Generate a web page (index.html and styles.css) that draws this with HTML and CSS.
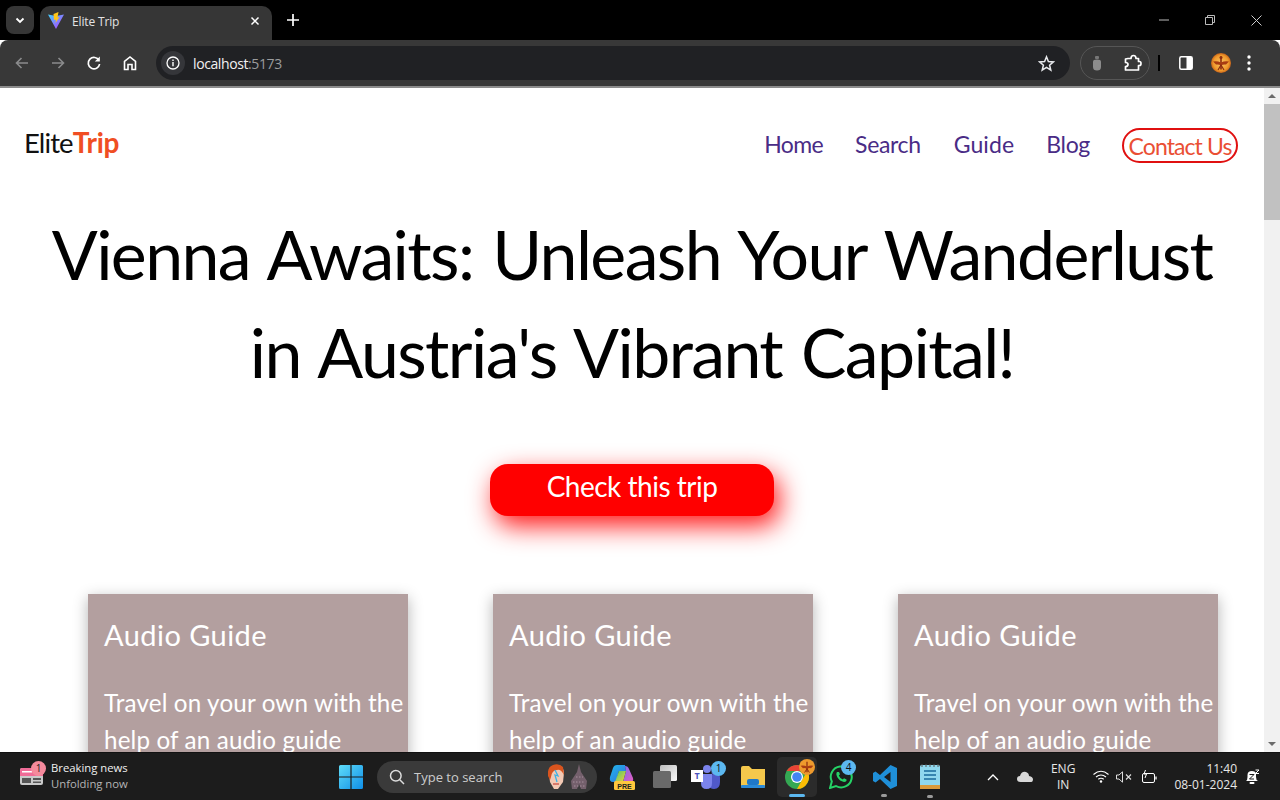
FILE: index.html
```html
<!DOCTYPE html>
<html lang="en">
<head>
<meta charset="utf-8">
<title>Elite Trip</title>
<link rel="stylesheet" href="styles.css">
</head>
<body>
<div class="window">
  <div class="tabstrip">
    <div class="tabsearch"><svg width="12" height="12" viewBox="0 0 12 12"><path d="M2.500 4.500 6 8l3.500-3.500" fill="none" stroke="#fff" stroke-width="1.800"/></svg></div>
    <div class="tab">
      <svg class="favicon" width="18" height="18" viewBox="0 0 18 18"><defs><linearGradient id="v" x1="0" y1="0" x2="1" y2="1"><stop offset="0" stop-color="#41d1ff"/><stop offset="1" stop-color="#bd34fe"/></linearGradient></defs><path d="M1 2.500 9 4l8-1.500L9 17z" fill="url(#v)"/><path d="M11.500 0 6.500 2l.5 6 2-.5-.5 3.500 4-6-2 .5z" fill="#ffc517"/></svg>
      <span class="tabtitle">Elite Trip</span>
      <svg class="tabclose" width="10" height="10" viewBox="0 0 10 10"><path d="M1.500 1.500l7 7M8.500 1.500l-7 7" stroke="#fff" stroke-width="1.500"/></svg>
    </div>
    <svg class="newtab" width="12" height="12" viewBox="0 0 12 12"><path d="M6 0v12M0 6h12" stroke="#fff" stroke-width="1.700"/></svg>
    <div class="wincontrols">
      <svg width="10" height="10" viewBox="0 0 10 10"><path d="M0 5h10" stroke="#bbb"/></svg>
      <svg width="10" height="10" viewBox="0 0 10 10"><path d="M.5 2.500h7v7h-7zM2.500 2.500V.5h7v7h-2" fill="none" stroke="#bbb"/></svg>
      <svg width="11" height="11" viewBox="0 0 11 11"><path d="M.5.5l10 10M10.500.5l-10 10" stroke="#ccc"/></svg>
    </div>
  </div>
  <div class="toolbar">
    <div class="navbtns">
      <svg width="16" height="16" viewBox="0 0 16 16"><path d="M14 8H2.500M7.500 3 2.500 8l5 5" fill="none" stroke="#8a8b8c" stroke-width="1.600"/></svg>
      <svg width="16" height="16" viewBox="0 0 16 16"><path d="M2 8h11.500M8.500 3l5 5-5 5" fill="none" stroke="#8a8b8c" stroke-width="1.600"/></svg>
      <svg width="16" height="16" viewBox="0 0 16 16"><path d="M13 5.500A5.700 5.700 0 1 0 13.600 9" fill="none" stroke="#fff" stroke-width="1.700"/><path d="M13.800 1.500v5h-5z" fill="#fff"/></svg>
      <svg width="16" height="16" viewBox="0 0 16 16"><path d="M2.500 14.500V6.500L8 2l5.500 4.500v8H10V9.500H6v5z" fill="none" stroke="#fff" stroke-width="1.600"/></svg>
    </div>
    <div class="omnibox">
      <div class="siteinfo"><svg width="14" height="14" viewBox="0 0 14 14"><circle cx="7" cy="7" r="6" fill="none" stroke="#fff" stroke-width="1.300"/><path d="M7 6v4.200M7 3.600v1.300" stroke="#fff" stroke-width="1.400"/></svg></div>
      <span class="url">localhost<span class="port">:5173</span></span>
      <svg class="star" width="17" height="17" viewBox="0 0 17 17"><path d="M8.500 1.800 10.400 6.500l5 .4-3.800 3.300 1.200 4.900-4.300-2.700-4.300 2.700 1.200-4.900L1.600 6.900l5-.4z" fill="none" stroke="#e8eaed" stroke-width="1.500"/></svg>
    </div>
    <div class="extpill">
      <svg width="10" height="15" viewBox="0 0 10 15"><rect x="3" y="0" width="4" height="3" rx="1" fill="#777"/><path d="M1 5.500Q1 3.500 5 3.500T9 5.500V11Q9 14.500 5 14.500T1 11z" fill="#8c8c8c"/></svg>
      <svg width="18" height="18" viewBox="0 0 18 18"><path d="M4 4.500 H7 Q7 1.500 9.500 1.500T12 4.500H14.500V7.500H15.500Q17 7.500 17 9.500T15.500 11.500H14.500V16H1.500V12.500Q4 12.500 4 10.500T1.500 8.500V5z" fill="none" stroke="#fff" stroke-width="1.700" stroke-linejoin="round"/></svg>
    </div>
    <div class="divider"></div>
    <div class="sidepanel"><svg width="14" height="14" viewBox="0 0 14 14"><rect x=".8" y=".8" width="12.400" height="12.400" rx="1.500" fill="none" stroke="#fff" stroke-width="1.500"/><rect x="7.500" y="1" width="5.500" height="12" fill="#fff"/></svg></div>
    <div class="avatar"><svg width="20" height="20" viewBox="0 0 20 20"><defs><radialGradient id="av"><stop offset="0" stop-color="#fbc565"/><stop offset=".75" stop-color="#f09a2c"/><stop offset="1" stop-color="#c9641a"/></radialGradient></defs><circle cx="10" cy="10" r="10" fill="url(#av)"/><path d="M10 3.500v13" stroke="#8e2f10" stroke-width="1.600"/><path d="M2 8.500Q6 7.500 10 9.500 14 7.500 18 8.500L15 11.500Q12 11 10 12.500 8 11 5 11.500z" fill="#a83c12"/><path d="M7 17l3-5 3 5" fill="none" stroke="#8e2f10" stroke-width="1.200"/><circle cx="10" cy="4.500" r="1.500" fill="#8e2f10"/></svg></div>
    <svg class="kebab" width="4" height="16" viewBox="0 0 4 16"><circle cx="2" cy="2" r="1.700" fill="#fff"/><circle cx="2" cy="8" r="1.700" fill="#fff"/><circle cx="2" cy="14" r="1.700" fill="#fff"/></svg>
  </div>
  <div class="viewport">
    <main class="page">
      <header class="sitehead">
        <a class="logo">Elite<b>Trip</b></a>
        <nav class="sitenav">
          <a class="home">Home</a>
          <a class="search">Search</a>
          <a class="guide">Guide</a>
          <a class="blog">Blog</a>
          <a class="contact">Contact Us</a>
        </nav>
      </header>
      <h1 class="headline">Vienna Awaits: Unleash Your Wanderlust<br>in Austria's Vibrant Capital!</h1>
      <div class="ctawrap"><button class="cta">Check this trip</button></div>
      <section class="cards">
        <article class="card"><h2>Audio Guide</h2><p>Travel on your own with the help of an audio guide</p></article>
        <article class="card"><h2>Audio Guide</h2><p>Travel on your own with the help of an audio guide</p></article>
        <article class="card"><h2>Audio Guide</h2><p>Travel on your own with the help of an audio guide</p></article>
      </section>
    </main>
    <div class="scrollbar">
      <svg width="16" height="16" viewBox="0 0 16 16"><path d="M8 6l4 4H4z" fill="#6b6b6b"/></svg>
      <div class="thumb"></div>
      <div class="track"></div>
      <svg width="16" height="16" viewBox="0 0 16 16"><path d="M8 10 4 6h8z" fill="#6b6b6b"/></svg>
    </div>
  </div>
  <footer class="taskbar">
    <div class="news">
      <div class="newsicon">
        <svg width="23" height="17" viewBox="0 0 23 17"><rect x="0" y="0" width="23" height="17" rx="2" fill="#c9c9c9"/><path d="M0 2q0-2 2-2h19q2 0 2 2v6H0z" fill="#f06b97"/><rect x="2" y="3" width="10" height="1.500" fill="#fff"/><rect x="2" y="10" width="9" height="5" fill="#555"/><rect x="13" y="10" width="8" height="2" fill="#555"/><rect x="13" y="13.500" width="8" height="1.500" fill="#555"/></svg>
        <span class="newsbadge">1</span>
      </div>
      <div class="newstext"><span class="n1">Breaking news</span><span class="n2">Unfolding now</span></div>
    </div>
    <div class="tasks">
      <svg class="winlogo" width="24" height="24" viewBox="0 0 24 24"><defs><linearGradient id="w" x1="0" y1="0" x2="1" y2="1"><stop offset="0" stop-color="#5fdcf8"/><stop offset="1" stop-color="#0f8fe8"/></linearGradient></defs><path d="M0 1.500Q0 0 1.500 0H11.400V11.400H0zM12.600 0H22.500Q24 0 24 1.500V11.400H12.600zM0 12.600H11.400V24H1.500Q0 24 0 22.500zM12.600 12.600H24V22.500Q24 24 22.500 24H12.600z" fill="url(#w)"/></svg>
      <div class="searchbox">
        <svg width="16" height="16" viewBox="0 0 16 16"><circle cx="6.800" cy="6.800" r="5.300" fill="none" stroke="#ddd" stroke-width="1.500"/><path d="M10.800 10.800 15 15" stroke="#ddd" stroke-width="1.500"/></svg>
        <span class="searchtext">Type to search</span>
        <svg class="doodle" width="40" height="26" viewBox="0 0 40 26"><path d="M1 9Q3 1 9 1t7 8l-1 9-5 7H6l-4-7z" fill="#f3c9b4"/><path d="M0 12Q-1 3 5 1T15 3L16 11Q13 5 9 6 4 6 3 13L2 16z" fill="#d9541e"/><path d="M7 6l3 6-3-1 2 7" fill="none" stroke="#3bb3e6" stroke-width="1.300"/><path d="M5 20h6" stroke="#c9463c" stroke-width="1.200"/><path d="M31 0 33 8 39 17 38 25 33 25 31 20 29 25 24 25 23 17 29 8z" fill="#74606c"/><path d="M25 18h12M26 22h11M28 13h7" stroke="#a58f9c" stroke-width="1" stroke-dasharray="1.500 1.500"/></svg>
      </div>
      <svg class="copilot" width="26" height="26" viewBox="0 0 26 26"><defs><linearGradient id="c1" x1="0" y1="0" x2="1" y2="1"><stop offset="0" stop-color="#22b8e8"/><stop offset="1" stop-color="#2f6fe0"/></linearGradient><linearGradient id="c2" x1="0" y1="0" x2="1" y2="1"><stop offset="0" stop-color="#7a6cf0"/><stop offset="1" stop-color="#e85cc0"/></linearGradient><linearGradient id="c3" x1="0" y1="0" x2="1" y2="1"><stop offset="0" stop-color="#4cc96c"/><stop offset="1" stop-color="#f6d13c"/></linearGradient></defs><path d="M8 1h8l1 6H10L7 18H4Q0 18 1 13L4 4Q5 1 8 1z" fill="url(#c1)"/><path d="M16 2Q19 2 20 5l4 9q1 4-3 4h-7l3-11z" fill="url(#c2)"/><path d="M10 7h7l-3 11H6z" fill="url(#c3)"/><rect x="5" y="17" width="21" height="9" rx="1.500" fill="#ffc83d"/><text x="15.500" y="24.500" class="pretext">PRE</text></svg>
      <svg class="taskview" width="24" height="23" viewBox="0 0 24 23"><defs><linearGradient id="tv" x1="0" y1="0" x2="1" y2="1"><stop offset="0" stop-color="#bdbdbd"/><stop offset="1" stop-color="#fafafa"/></linearGradient></defs><rect x="7" y="0" width="17" height="16" rx="1.500" fill="url(#tv)"/><rect x="0" y="6" width="18" height="17" rx="1.500" fill="#6a6a6a"/></svg>
      <div class="appicon teams">
        <svg width="24" height="24" viewBox="0 0 24 24"><circle cx="10" cy="4" r="4" fill="#7b83eb"/><circle cx="18" cy="7" r="3.500" fill="#5b62c4"/><path d="M13 10h8q2 0 2 2v5q0 7-6 7-4 0-5-3z" fill="#5059c9"/><path d="M4 9h11v9q0 6-5.500 6T4 18z" fill="#7b83eb"/></svg>
        <span class="teamst">T</span><span class="appbadge teamsb">1</span>
      </div>
      <svg class="folder" width="24" height="22" viewBox="0 0 24 22"><path d="M0 2Q0 0 2 0H8l3 3H24V20Q24 22 22 22H2Q0 22 0 20z" fill="#f5c84c"/><rect x="6" y="13" width="12" height="6" rx="2" fill="#1f78c8"/><rect x="0" y="19" width="24" height="3" rx="1" fill="#2a8ad8"/></svg>
      <div class="chromeslot">
        <svg width="26" height="26" viewBox="0 0 26 26"><circle cx="13" cy="13" r="12" fill="#34a853"/><path d="M2.600 7A12 12 0 0 1 23.400 7H13z" fill="#ea4335"/><path d="M23.400 7A12 12 0 0 1 13 25L18 16z" fill="#fbbc04"/><circle cx="13" cy="13" r="6" fill="#fff"/><circle cx="13" cy="13" r="4.800" fill="#4285f4"/></svg>
        <svg class="chromeavatar" width="16" height="16" viewBox="0 0 20 20"><circle cx="10" cy="10" r="10" fill="#ee9a2d"/><path d="M10 3.500v13" stroke="#8e2f10" stroke-width="1.600"/><path d="M2 8.500Q6 7.500 10 9.500 14 7.500 18 8.500L15 11.500Q12 11 10 12.500 8 11 5 11.500z" fill="#a83c12"/><path d="M7 17l3-5 3 5" fill="none" stroke="#8e2f10" stroke-width="1.200"/></svg>
        <span class="activebar"></span>
      </div>
      <div class="appicon wa">
        <svg width="24" height="24" viewBox="0 0 24 24"><path d="M1 23 2.800 16.500A10.500 10.500 0 1 1 7 21z" fill="none" stroke="#25d366" stroke-width="2"/><path d="M8 7Q6.500 9 8.500 12.500T15 17Q18 16.500 17.500 14.500L15 13.300 13.800 14.500Q11 13.500 9.800 10.500L11 9.200 10 7z" fill="#25d366"/></svg>
        <span class="appbadge wab">4</span>
      </div>
      <div class="appicon vs">
        <svg width="24" height="24" viewBox="0 0 24 24"><path d="M17.500 0 24 3v18l-6.500 3L7 14l-4.500 3.500L0 16v-8l2.500-1.500L7 10zM17.500 7 11 12l6.500 5z" fill="#1f8fd8"/></svg>
        <span class="dot"></span>
      </div>
      <div class="appicon np">
        <svg width="22" height="26" viewBox="0 0 22 26"><rect x="1" y="1" width="20" height="24" rx="1.500" fill="#8fd8ee"/><rect x="1" y="21" width="20" height="4" fill="#d99a3a"/><path d="M5 7h12M5 11h12M5 15h12" stroke="#1a6b9c" stroke-width="1.500"/><path d="M3 0v3M7 0v3M11 0v3M15 0v3M19 0v3" stroke="#555"/></svg>
        <span class="dot"></span>
      </div>
    </div>
    <div class="tray">
      <svg class="chev" width="12" height="8" viewBox="0 0 12 8"><path d="M1 7l5-5 5 5" fill="none" stroke="#fff" stroke-width="1.300"/></svg>
      <svg class="cloud" width="16" height="11" viewBox="0 0 16 11"><path d="M3.500 11Q0 11 0 8t3-3Q4.500 0 9 1q3 1 3 4 4 .5 4 3.500T13 11z" fill="#d8d8d8"/></svg>
      <div class="lang"><span>ENG</span><span>IN</span></div>
      <svg class="wifi" width="16" height="13" viewBox="0 0 16 13"><path d="M.5 4.500Q8-2 15.500 4.500M3 7q5-4 10 0M5.300 9.300q2.700-2 5.400 0" fill="none" stroke="#fff" stroke-width="1.100"/><circle cx="8" cy="11.500" r="1.200" fill="#fff"/></svg>
      <svg class="speaker" width="16" height="12" viewBox="0 0 16 12"><path d="M.5 4h2.500L6.500.8v10.400L3 8H.5z" fill="none" stroke="#ddd"/><path d="M10 3.500l5 5M15 3.500l-5 5" stroke="#ddd" stroke-width="1.100"/></svg>
      <svg class="battery" width="16" height="14" viewBox="0 0 16 14"><rect x="1.500" y="3.500" width="12" height="9" rx="1.500" fill="none" stroke="#fff"/><path d="M15 6.500v3" stroke="#fff" stroke-width="1.300"/><path d="M4.500 0 3 4h2.500L4 8" fill="none" stroke="#fff"/></svg>
      <div class="clock"><span>11:40</span><span>08-01-2024</span></div>
      <svg class="bell" width="15" height="16" viewBox="0 0 15 16"><path d="M1 12Q2.500 11 2.500 8V6Q2.500 2 7 2q3 0 4 2v4q0 3 2 4z" fill="#fff"/><rect x="4.500" y="13" width="5" height="2" rx="1" fill="#fff"/><path d="M4.500 5.500h4.500l-4.500 4.500h4.500" fill="none" stroke="#1c1c1c" stroke-width="1"/><path d="M10.500 1h3.500l-3.500 3.500h3.500" fill="none" stroke="#fff" stroke-width="1"/></svg>
    </div>
  </footer>
</div>
</body>
</html>
```

FILE: styles.css
```css
* { box-sizing: border-box; margin: 0; padding: 0; }
html, body { width: 1280px; height: 800px; overflow: hidden; background: #fff; }
body { font-family: "Liberation Sans", Arial, sans-serif; }
svg { display: block; flex: none; }

.window { width: 1280px; height: 800px; display: flex; flex-direction: column; overflow: hidden; }

/* tab strip */
.tabstrip { height: 40px; background: #000; display: flex; align-items: flex-end; padding-left: 6px; flex: none; }
.tabsearch { width: 28px; height: 28px; margin-bottom: 6px; border-radius: 8px; background: #363636; display: flex; align-items: center; justify-content: center; }
.tab { width: 232px; height: 34px; margin-left: 6px; background: #363636; border-radius: 10px 10px 0 0; display: flex; align-items: center; padding: 0 12px 4px 7px; }
.favicon { margin-right: 7px; }
.tabtitle { flex: 1; font-size: 12px; color: #e3e3e3; font-family: "Open Sans", sans-serif; letter-spacing: -.15px; }
.newtab { margin: 0 0 14px 15px; }
.wincontrols { margin-left: auto; display: flex; gap: 36px; align-items: center; height: 40px; padding-right: 18px; align-self: flex-start; }

/* toolbar */
.toolbar { height: 48px; flex: none; background: #383838; border-radius: 8px 8px 0 0; border-bottom: 2px solid #8c8c8c; display: flex; align-items: center; padding: 0 23px 0 14px; }
.navbtns { display: flex; gap: 20px; align-items: center; }
.omnibox { width: 914px; height: 34px; margin-left: 18px; border-radius: 17px; background: #202124; display: flex; align-items: center; padding: 0 15px 0 5px; }
.siteinfo { width: 24px; height: 24px; border-radius: 50%; background: #35363a; display: flex; align-items: center; justify-content: center; margin-right: 8px; }
.url { flex: 1; font-size: 14px; color: #f1f1f1; font-family: "Open Sans", sans-serif; letter-spacing: -.4px; }
.port { color: #9a9b9d; }
.extpill { width: 70px; height: 34px; margin-left: 10px; border: 1px solid #565656; border-radius: 17px; display: flex; align-items: center; justify-content: space-between; padding: 0 7px 0 11px; }
.divider { width: 2px; height: 16px; background: #000; margin-left: 8px; }
.sidepanel { margin-left: 19px; }
.avatar { margin-left: 18px; }
.kebab { margin-left: 16px; }

/* viewport */
.viewport { flex: 1; min-height: 0; display: flex; }
.page { flex: 1; min-width: 0; background: #fff; overflow: hidden; font-family: Lato, sans-serif; font-weight: 400; }
.scrollbar { width: 16px; background: #f1f1f1; display: flex; flex-direction: column; align-items: center; }
.thumb { width: 16px; height: 116px; background: #c1c1c1; flex: none; }
.track { flex: 1; }

.sitehead { display: flex; justify-content: space-between; align-items: center; padding: 38px 26px 0 24px; height: 76px; }
.logo { font-size: 27.500px; color: #111; font-weight: 400; letter-spacing: -.9px; margin-top: -6px; }
.logo b { color: #f04e23; font-weight: 700; font-size: 28px; letter-spacing: -.2px; }
.sitenav { display: flex; align-items: center; font-size: 23px; color: #4a2c86; font-weight: 400; }
.home { margin-right: 32px; letter-spacing: -.6px; margin-top: -3px; }
.search { margin-right: 33px; letter-spacing: -.35px; margin-top: -3px; }
.guide { margin-right: 32px; letter-spacing: .1px; margin-top: -3px; }
.blog { margin-right: 32px; letter-spacing: -.3px; margin-top: -3px; }
.contact { width: 116px; height: 35px; border: 2px solid #e01010; border-radius: 18px; color: #ea4f34; text-align: center; line-height: 33px; letter-spacing: -.9px; white-space: nowrap; }

.headline { margin-top: 41px; text-align: center; font-size: 68px; line-height: 98px; font-weight: 400; color: #000; letter-spacing: -1.600px; word-spacing: 3px; white-space: nowrap; }
.ctawrap { display: flex; justify-content: center; margin-top: 63px; }
.cta { width: 284px; height: 52px; background: #f00; border: 0; border-radius: 18px; color: #fff; font-family: Lato, sans-serif; font-weight: 400; font-size: 28px; letter-spacing: -.5px; box-shadow: 5px 10px 26px rgba(255,0,0,.9); padding-bottom: 8px; }

.cards { display: grid; grid-template-columns: repeat(3, 320px); gap: 85px; padding-left: 88px; margin-top: 78px; }
.card { background: #b39f9f; color: #fff; height: 240px; padding: 21px 0 0 16px; box-shadow: 0 4px 14px rgba(0,0,0,.3); }
.card h2 { font-size: 29px; font-weight: 400; line-height: 40px; letter-spacing: .45px; }
.card p { margin-top: 29px; font-size: 24.200px; font-weight: 400; line-height: 37px; letter-spacing: .15px; }

/* taskbar */
.taskbar { height: 48px; flex: none; background: #1c1c1c; display: flex; align-items: center; color: #fff; font-family: "Open Sans", sans-serif; border-top: 1px solid #111; }
.news { display: flex; align-items: center; margin-left: 20px; width: 319px; }
.newsicon { position: relative; width: 23px; height: 17px; margin-right: 8px; }
.newsbadge { position: absolute; left: 11px; top: -7px; width: 15px; height: 15px; border-radius: 50%; background: #f58a9c; color: #222; font-size: 10px; text-align: center; line-height: 15px; }
.newstext { display: flex; flex-direction: column; font-size: 11.300px; line-height: 16px; margin-top: -2px; }
.n1 { color: #f0f0f0; }
.n2 { color: #b5b5b5; }
.tasks { display: flex; align-items: center; }
.searchbox { width: 220px; height: 32px; border-radius: 16px; background: #3a3a3a; margin-left: 14px; display: flex; align-items: center; padding-left: 12px; }
.searchtext { font-size: 13px; margin-left: 9px; color: #ccc; flex: 1; }
.doodle { margin-right: 9px; }
.copilot { margin-left: 12px; }
.pretext { font-size: 7px; font-weight: 700; text-anchor: middle; fill: #222; font-family: "Liberation Sans", sans-serif; }
.taskview { margin-left: 18px; }
.appicon { position: relative; }
.teams { margin-left: 20px; width: 24px; height: 24px; }
.teamst { position: absolute; left: -6px; top: 5px; width: 12px; height: 12px; background: #fff; color: #4b53bc; font-size: 9px; font-weight: 700; text-align: center; line-height: 12px; }
.appbadge { position: absolute; width: 15px; height: 15px; border-radius: 50%; background: #5cb8f0; color: #111; font-size: 10px; text-align: center; line-height: 15px; }
.teamsb { left: 14px; top: -4px; }
.folder { margin-left: 20px; }
.chromeslot { position: relative; width: 40px; height: 40px; background: #2b2b2b; border-radius: 5px; margin-left: 12px; display: flex; align-items: center; justify-content: center; }
.chromeavatar { position: absolute; right: 2px; top: 2px; }
.activebar { position: absolute; left: 12px; bottom: 0; width: 16px; height: 3px; border-radius: 2px; background: #5cb8f0; }
.wa { margin-left: 12px; }
.wab { left: 12px; top: -5px; }
.vs { margin-left: 20px; }
.np { margin-left: 22px; }
.dot { position: absolute; left: 8px; bottom: -8px; width: 6px; height: 3px; border-radius: 2px; background: #9a9a9a; }
.tray { margin-left: auto; display: flex; align-items: center; padding-right: 20px; font-size: 12px; }
.cloud { margin-left: 18px; }
.lang { display: flex; flex-direction: column; align-items: center; line-height: 16px; margin: 0 18px 0 18px; color: #e8e8e8; }
.wifi { margin-right: 7px; }
.speaker { margin-right: 9px; }
.clock { display: flex; flex-direction: column; align-items: flex-end; line-height: 16px; margin-left: 17px; color: #e8e8e8; }
.bell { margin-left: 8px; }
```
